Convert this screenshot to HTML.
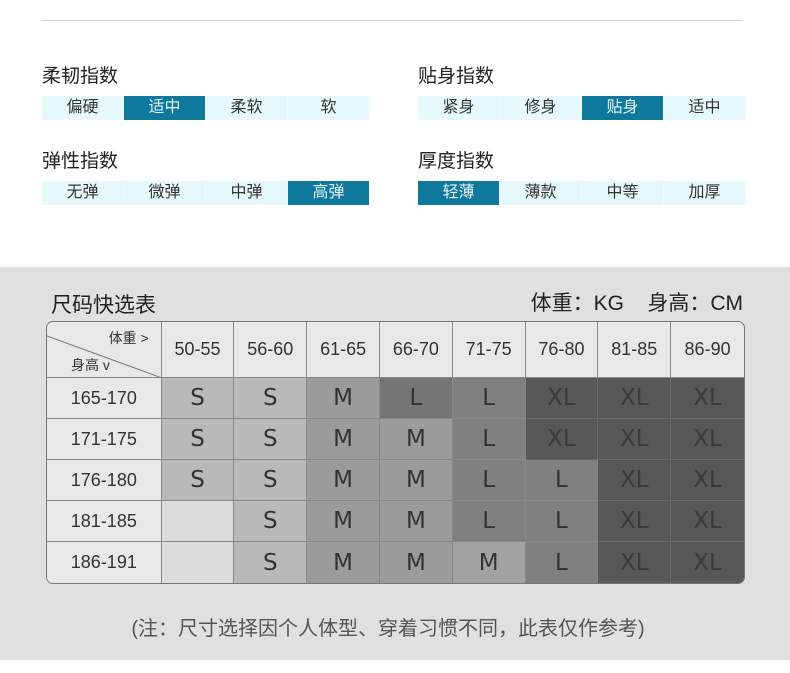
<!DOCTYPE html>
<html><head><meta charset="utf-8"><style>
*{margin:0;padding:0;box-sizing:border-box}
body{width:790px;height:673px;background:#fff;font-family:"Liberation Sans","Noto Sans CJK SC",sans-serif;position:relative;overflow:hidden}
.abs{position:absolute}
.hr{left:42px;top:20px;width:700px;height:1px;background:#c9d3d6}
.t{font-size:19px;color:#222;line-height:22px}
.bar{display:flex;height:24px}
.bar div{width:82px;background:#e5f8fb;text-align:center;font-size:16px;line-height:24px;color:#333;border-right:1px solid #f2fcfd}
.bar div.on{background:#0e789d;color:#e8f4f8}
.gray{left:0;top:267px;width:790px;height:393px;background:#e0e0e0}
table{position:absolute;left:46px;top:321px;border-collapse:separate;border-spacing:0;border:1px solid #777;border-radius:7px;overflow:hidden;width:699px}
td{border-right:1px solid #888;border-bottom:1px solid #888;text-align:center;font-size:23px;color:#333;width:73px;height:41px;font-family:"DejaVu Sans","Noto Sans CJK SC",sans-serif;font-weight:normal}
tr td:last-child{border-right:none}
tr:last-child td{border-bottom:none}
.h td{background:#e8e8e8;height:56px;font-size:18px;color:#333;font-family:"Liberation Sans",sans-serif}
td.r{background:#e8e8e8;font-size:18px;width:115px;font-family:"Liberation Sans",sans-serif}
.S{background:#b9b9b9}.M{background:#9b9b9b}.L{background:#808080}.LD{background:#757575}.X{background:#575757;color:#3a3a3a;border-color:#6a6a6a}.E{background:#dcdcdc}.ML{background:#a2a2a2}
</style></head><body>
<div class="abs hr"></div>
<div class="abs t" style="left:42px;top:66px">柔韧指数</div>
<div class="abs bar" style="left:42px;top:96px"><div>偏硬</div><div class="on">适中</div><div>柔软</div><div>软</div></div>
<div class="abs t" style="left:42px;top:151px">弹性指数</div>
<div class="abs bar" style="left:42px;top:181px"><div>无弹</div><div>微弹</div><div>中弹</div><div class="on">高弹</div></div>
<div class="abs t" style="left:418px;top:66px">贴身指数</div>
<div class="abs bar" style="left:418px;top:96px"><div>紧身</div><div>修身</div><div class="on">贴身</div><div>适中</div></div>
<div class="abs t" style="left:418px;top:151px">厚度指数</div>
<div class="abs bar" style="left:418px;top:181px"><div class="on">轻薄</div><div>薄款</div><div>中等</div><div>加厚</div></div>
<div class="abs gray"></div>
<div class="abs" style="left:51px;top:289px;font-size:21px;color:#222">尺码快选表</div>
<div class="abs" style="right:47px;top:287px;font-size:21px;color:#222">体重：KG&nbsp;&nbsp;&nbsp;&nbsp;身高：CM</div>
<table>
<tr class="h"><td class="r" style="position:relative;background:#e8e8e8"><svg class="abs" style="left:0;top:0" width="115" height="56"><line x1="0" y1="14" x2="115" y2="56" stroke="#777" stroke-width="1"/></svg><span class="abs" style="right:12px;top:6px;font-size:14px">体重 &gt;</span><span class="abs" style="left:24px;top:33px;font-size:14px">身高 v</span></td><td>50-55</td><td>56-60</td><td>61-65</td><td>66-70</td><td>71-75</td><td>76-80</td><td>81-85</td><td>86-90</td></tr>
<tr><td class="r">165-170</td><td class="S">S</td><td class="S">S</td><td class="M">M</td><td class="LD">L</td><td class="L">L</td><td class="X">XL</td><td class="X">XL</td><td class="X">XL</td></tr>
<tr><td class="r">171-175</td><td class="S">S</td><td class="S">S</td><td class="M">M</td><td class="M">M</td><td class="L">L</td><td class="X">XL</td><td class="X">XL</td><td class="X">XL</td></tr>
<tr><td class="r">176-180</td><td class="S">S</td><td class="S">S</td><td class="M">M</td><td class="M">M</td><td class="L">L</td><td class="L">L</td><td class="X">XL</td><td class="X">XL</td></tr>
<tr><td class="r">181-185</td><td class="E"></td><td class="S">S</td><td class="M">M</td><td class="M">M</td><td class="L">L</td><td class="L">L</td><td class="X">XL</td><td class="X">XL</td></tr>
<tr><td class="r">186-191</td><td class="E"></td><td class="S">S</td><td class="M">M</td><td class="M">M</td><td class="ML">M</td><td class="L">L</td><td class="X">XL</td><td class="X">XL</td></tr>
</table>
<div class="abs" style="left:0;width:776px;top:612px;text-align:center;font-size:20px;color:#555">(注：尺寸选择因个人体型、穿着习惯不同，此表仅作参考)</div>
</body></html>
